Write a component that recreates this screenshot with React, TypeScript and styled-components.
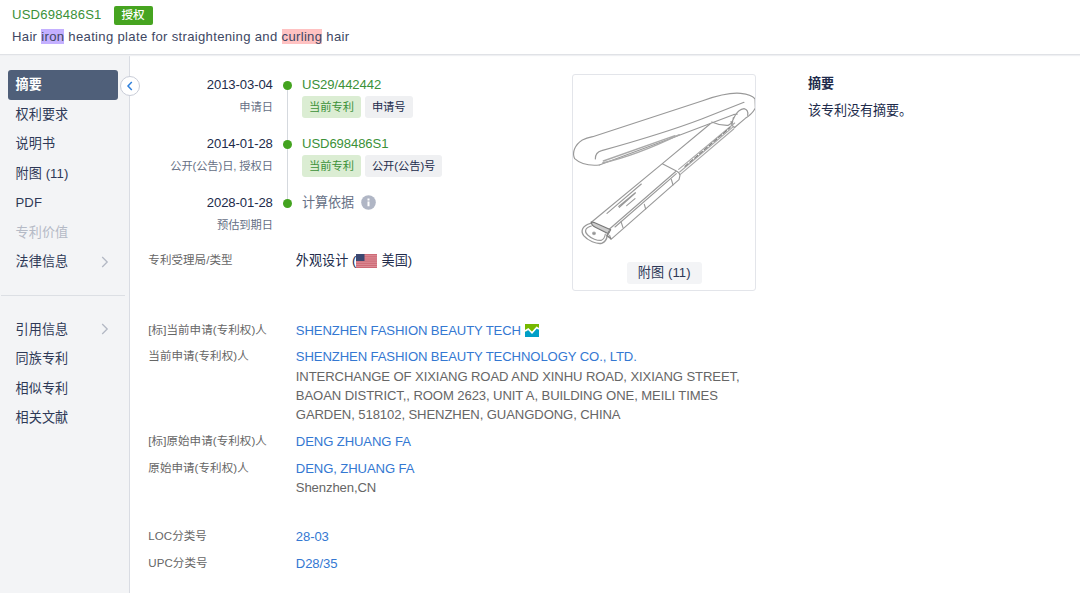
import React from 'react';
import styled, { createGlobalStyle } from 'styled-components';

const GlobalStyle = createGlobalStyle`
  * { box-sizing: border-box; }
  body {
    margin: 0;
    background: #fff;
    color: #212b4b;
    font-family: "Liberation Sans", "Noto Sans CJK SC", sans-serif;
    font-size: 13.1px;
    letter-spacing: -0.1px;
    line-height: 19.4px;
    overflow: hidden;
  }
`;

const Page = styled.div`
  display: flex;
  flex-direction: column;
  height: 593px;
`;

const Header = styled.header`
  height: 55px;
  flex: none;
  padding: 5px 12px 0;
  border-bottom: 1px solid #e0e2e6;
  box-shadow: 0 1px 1px #eff0f3;
  z-index: 1;
`;

const HeaderLine = styled.div`
  display: flex;
  align-items: center;
  height: 20px;
  color: #3b9138;
  letter-spacing: 0.2px;
`;

const Status = styled.span`
  display: flex;
  align-items: center;
  justify-content: center;
  width: 39px;
  height: 19px;
  margin-left: 12px;
  border-radius: 2px;
  background: #46a420;
  color: #fff;
  font-size: 11.6px;
  font-weight: 500;
  letter-spacing: 0;
`;

const Title = styled.div`
  height: 24px;
  line-height: 24px;
  white-space: nowrap;
  letter-spacing: 0.32px;
  color: #3e4763;
`;

const Mark = styled.mark<{ $color: string }>`
  background: ${(p) => p.$color};
  color: inherit;
`;

const Body = styled.div`
  display: flex;
  flex: 1;
`;

const Sidebar = styled.nav`
  position: relative;
  width: 130px;
  flex: none;
  padding: 15px 0 0;
  background: #f3f4f6;
  border-right: 1px solid #d9dce3;
  letter-spacing: 0.1px;
`;

const NavItem = styled.div<{ $active?: boolean; $disabled?: boolean }>`
  display: flex;
  align-items: center;
  justify-content: space-between;
  width: 110px;
  height: 29.5px;
  margin-left: 8px;
  padding: 0 9px 0 7.5px;
  border-radius: 3px;
  background: ${(p) => (p.$active ? '#4f5f79' : 'transparent')};
  color: ${(p) => (p.$active ? '#fff' : p.$disabled ? '#b5bac6' : '#2e3957')};
  font-weight: ${(p) => (p.$active ? 700 : 400)};
`;

const Divider = styled.div`
  height: 1px;
  margin: 18px 4px 19px 1px;
  background: #dcdfe4;
`;

const Collapse = styled.button`
  position: absolute;
  left: 120px;
  top: 21px;
  width: 20px;
  height: 20px;
  padding: 0;
  display: flex;
  align-items: center;
  justify-content: center;
  border: 1px solid #c9cdd8;
  border-radius: 50%;
  background: #fff;
`;

const Content = styled.main`
  flex: 1;
  padding: 19px 0 0 18.3px;
`;

const Overview = styled.section`
  display: flex;
  height: 246px;
`;

const Summary = styled.div`
  width: 423.7px;
`;

const Timeline = styled.div`
  padding-top: 1px;
`;

const Event = styled.div`
  display: grid;
  grid-template-columns: 124.5px 29.3px 1fr;
  height: 59px;
  &:last-child { height: 58px; }
`;

const When = styled.div`
  text-align: right;
  white-space: nowrap;
`;

const Sub = styled.div`
  margin-top: 3.6px;
  font-size: 11.25px;
  color: #667085;
`;

const Track = styled.div<{ $last?: boolean }>`
  display: flex;
  flex-direction: column;
  align-items: center;
  padding-top: 5.5px;
  &::after {
    content: "";
    display: ${(p) => (p.$last ? 'none' : 'block')};
    width: 1.6px;
    height: 50px;
    background: #d5d9de;
  }
`;

const Dot = styled.i`
  width: 9px;
  height: 9px;
  flex: none;
  border-radius: 50%;
  background: #43a31f;
`;

const Number = styled.div<{ $muted?: boolean }>`
  display: flex;
  align-items: center;
  height: 19.4px;
  color: ${(p) => (p.$muted ? '#667085' : '#3b9138')};
`;

const Tags = styled.div`
  display: flex;
  gap: 4px;
  margin-top: 1.6px;
`;

const Tag = styled.span<{ $green?: boolean }>`
  height: 22px;
  line-height: 22px;
  padding: 0 7px;
  border-radius: 3px;
  font-size: 11.25px;
  letter-spacing: -0.05px;
  white-space: nowrap;
  background: ${(p) => (p.$green ? '#dbedd3' : '#eff0f2')};
  color: ${(p) => (p.$green ? '#3b9138' : '#212b4b')};
`;

const InfoIcon = styled.svg`
  margin-left: 6.5px;
`;

const Row = styled.div`
  display: grid;
  grid-template-columns: 147.5px 448px;
  margin-bottom: 7.35px;
`;

const Label = styled.div`
  font-size: 11.5px;
  letter-spacing: 0.08px;
  color: #666;
  white-space: nowrap;
`;

const Value = styled.div`
  color: #666;
  white-space: nowrap;
`;

const Link = styled.a`
  color: #3478d2;
`;

const Office = styled(Value)`
  display: flex;
  align-items: center;
  color: #212b4b;
  letter-spacing: 0.05px;
`;

const Flag = styled.svg`
  margin-right: 4px;
`;

const Brand = styled.svg`
  margin-left: 4px;
  vertical-align: -2.5px;
`;

const Figure = styled.figure`
  display: flex;
  flex-direction: column;
  align-items: center;
  width: 184.5px;
  height: 217px;
  margin: 0;
  border: 1px solid #e3e5ea;
  border-radius: 3px;
`;

const Caption = styled.figcaption`
  width: 75px;
  height: 22px;
  margin-top: 2px;
  line-height: 22px;
  text-align: center;
  letter-spacing: 0.1px;
  border-radius: 3px;
  background: #f3f4f6;
  color: #2e3957;
`;

const Abstract = styled.div`
  margin-left: 51.5px;
`;

const Heading = styled.h2`
  margin: 0 0 7.5px;
  font-size: 13.1px;
  font-weight: 700;
`;

const Details = styled.section`
  padding-top: 0.5px;
`;

const Gap = styled.div`
  height: 22px;
`;

const Chevron = () => (
  <svg width="8" height="12" viewBox="0 0 8 12" fill="none" stroke="#b3b8c4" strokeWidth="1.3">
    <path d="M1.2 1l5 5-5 5" />
  </svg>
);

const HairIron = () => (
  <svg width="182.5" height="185" viewBox="24 30 547.5 555" fill="none" stroke="#999" strokeWidth="3.4" strokeLinecap="round" strokeLinejoin="round">
    <path d="M103 300C70 303 43 294 29 281C20 263 30 239 52 225Q64 219 83 215L413 107Q487 81 527 85Q562 89 570 102L571 129Q562 147 541 160L507 189" />
    <path d="M91 282C91 268 97 260 110 257Q300 204 410 162L537 112" />
    <path d="M103 300L343 211L505 149L517 147" />
    <path d="M115 288L330 212M113 294Q210 273 343 209" stroke="#aaa" strokeWidth="4" />
    <path d="M440 171Q464 182 490 181L499 175L510 152Q521 133 537 131Q551 134 548 151M498 170Q500 184 509 187M505 158L501 180" />
    <path d="M435 177L292 296L80 471M292 296L334 318L130 495M334 318Q344 323 345 331L342 344L138 523L134 511M334 326L150 486" />
    <path d="M341 313L509 174M344 321L505 185M346 328L506 192" stroke="#a8a8a8" />
    <path d="M360 304L495 188" stroke="#808080" strokeDasharray="12 7" />
    <path d="M319 343L324 360M238 418L242 432M168 470L174 488" />
    <path d="M126 445L229 357M161 424L211 383M163 427L211 384M185 422L210 401" />
    <path d="M78 471Q80 482 91 487L130 506L137 494L86 472Z" stroke="#777" fill="#ccc" />
    <path d="M77 475C52 481 46 498 56 512C68 527 95 538 110 535Q125 528 126 514L132 500" strokeWidth="4" />
    <path d="M79 483C60 488 57 500 68 510C79 521 97 527 109 526Q119 522 121 507" />
    <circle cx="87" cy="505" r="4" fill="#888" stroke="#aaa" />
    <path d="M133 498L126 512L137 520" stroke="#888" strokeWidth="5" />
  </svg>
);

const topNav = [
  { text: '摘要', active: true },
  { text: '权利要求' },
  { text: '说明书' },
  { text: '附图 (11)' },
  { text: 'PDF' },
  { text: '专利价值', disabled: true },
  { text: '法律信息', arrow: true },
];

const bottomNav = [
  { text: '引用信息', arrow: true },
  { text: '同族专利' },
  { text: '相似专利' },
  { text: '相关文献' },
];

type NavEntry = { text: string; active?: boolean; disabled?: boolean; arrow?: boolean };

const NavList = ({ items }: { items: NavEntry[] }) => (
  <>
    {items.map((i) => (
      <NavItem key={i.text} $active={i.active} $disabled={i.disabled}>
        <span>{i.text}</span>
        {i.arrow && <Chevron />}
      </NavItem>
    ))}
  </>
);

export default function App() {
  return (
    <Page>
      <GlobalStyle />
      <Header>
        <HeaderLine>
          USD698486S1
          <Status>授权</Status>
        </HeaderLine>
        <Title>
          Hair <Mark $color="#c4b0ff">iron</Mark> heating plate for straightening and{' '}
          <Mark $color="#ffc2c2">curling</Mark> hair
        </Title>
      </Header>
      <Body>
        <Sidebar>
          <NavList items={topNav} />
          <Divider />
          <NavList items={bottomNav} />
          <Collapse aria-label="collapse">
            <svg width="8" height="10" viewBox="0 0 8 10" fill="none" stroke="#2f80dc" strokeWidth="1.5">
              <path d="M5.8 1L2 5l3.8 4" />
            </svg>
          </Collapse>
        </Sidebar>
        <Content>
          <Overview>
            <Summary>
              <Timeline>
                <Event>
                  <When>2013-03-04<Sub>申请日</Sub></When>
                  <Track><Dot /></Track>
                  <div>
                    <Number>US29/442442</Number>
                    <Tags><Tag $green>当前专利</Tag><Tag>申请号</Tag></Tags>
                  </div>
                </Event>
                <Event>
                  <When>2014-01-28<Sub>公开(公告)日, 授权日</Sub></When>
                  <Track><Dot /></Track>
                  <div>
                    <Number>USD698486S1</Number>
                    <Tags><Tag $green>当前专利</Tag><Tag>公开(公告)号</Tag></Tags>
                  </div>
                </Event>
                <Event>
                  <When>2028-01-28<Sub>预估到期日</Sub></When>
                  <Track $last><Dot /></Track>
                  <Number $muted>
                    计算依据
                    <InfoIcon width="15" height="15" viewBox="0 0 15 15">
                      <circle cx="7.5" cy="7.5" r="7.3" fill="#b0b6c5" />
                      <path d="M7.5 3.4v2M7.5 6.6v4.6" stroke="#fff" strokeWidth="2" />
                    </InfoIcon>
                  </Number>
                </Event>
              </Timeline>
              <Row>
                <Label>专利受理局/类型</Label>
                <Office>
                  外观设计 (
                  <Flag width="21" height="14" viewBox="0 0 21 14">
                    <rect width="21" height="14" fill="#dc8b95" />
                    <path d="M0 .6h21M0 2.8h21M0 5h21M0 7.1h21M0 9.3h21M0 11.4h21M0 13.5h21" stroke="#cc6874" strokeWidth="1" />
                    <rect width="8.5" height="7" fill="#3b4770" />
                  </Flag>
                  美国)
                </Office>
              </Row>
            </Summary>
            <Figure>
              <HairIron />
              <Caption>附图 (11)</Caption>
            </Figure>
            <Abstract>
              <Heading>摘要</Heading>
              <div>该专利没有摘要。</div>
            </Abstract>
          </Overview>
          <Details>
            <Row>
              <Label>[标]当前申请(专利权)人</Label>
              <Value>
                <Link>SHENZHEN FASHION BEAUTY TECH</Link>
                <Brand width="14" height="13" viewBox="0 0 14 13">
                  <rect width="14" height="13" fill="#76b900" />
                  <path d="M0 8l3.5-3L7 9l5-5 2 1.5V13H0z" fill="#009fc7" />
                  <path d="M0 7l3.3-2L7 8.8 11.7 3.5 14 5" fill="none" stroke="#fff" strokeWidth="1.7" />
                </Brand>
              </Value>
            </Row>
            <Row>
              <Label>当前申请(专利权)人</Label>
              <Value>
                <Link>SHENZHEN FASHION BEAUTY TECHNOLOGY CO., LTD.</Link><br />
                INTERCHANGE OF XIXIANG ROAD AND XINHU ROAD, XIXIANG STREET,<br />
                BAOAN DISTRICT,, ROOM 2623, UNIT A, BUILDING ONE, MEILI TIMES<br />
                GARDEN, 518102, SHENZHEN, GUANGDONG, CHINA
              </Value>
            </Row>
            <Row>
              <Label>[标]原始申请(专利权)人</Label>
              <Value><Link>DENG ZHUANG FA</Link></Value>
            </Row>
            <Row>
              <Label>原始申请(专利权)人</Label>
              <Value><Link>DENG, ZHUANG FA</Link><br />Shenzhen,CN</Value>
            </Row>
            <Gap />
            <Row>
              <Label>LOC分类号</Label>
              <Value><Link>28-03</Link></Value>
            </Row>
            <Row>
              <Label>UPC分类号</Label>
              <Value><Link>D28/35</Link></Value>
            </Row>
          </Details>
        </Content>
      </Body>
    </Page>
  );
}
